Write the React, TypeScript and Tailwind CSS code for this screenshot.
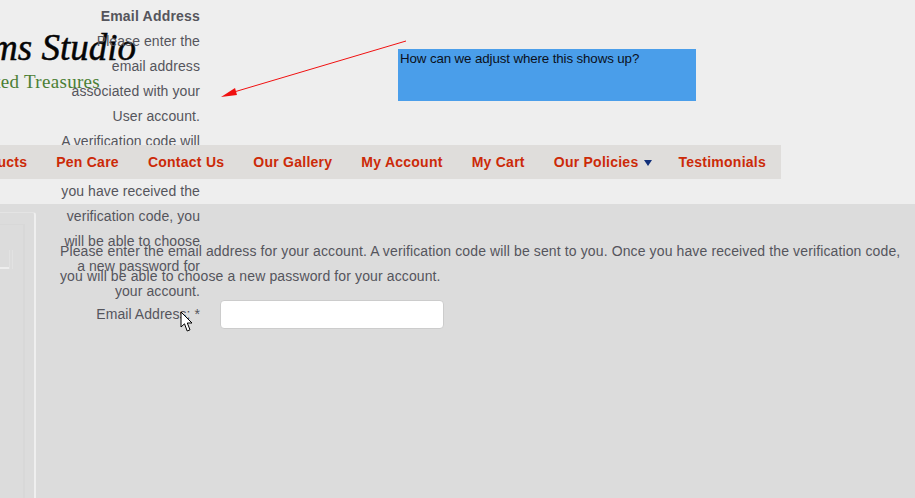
export default function App() {
  const nav = ["Products", "Pen Care", "Contact Us", "Our Gallery", "My Account", "My Cart", "Our Policies", "Testimonials"];
  const lines = ["Please enter the", "email address", "associated with your", "User account.", "A verification code will", "be sent to you. Once", "you have received the", "verification code, you", "will be able to choose", "a new password for", "your account."];
  return (
    <div className="relative flex flex-col w-[915px] h-[498px] overflow-hidden bg-[#dcdcdc] text-[14px] tracking-[0.12px] text-[#55555c] font-['Liberation_Sans',Arial,sans-serif]">
      {/* Header band */}
      <header className="flex flex-col h-[204px] shrink-0 bg-[#eeeeee]">
        <div className="flex items-start h-[145px]">
          {/* Logo */}
          <div className="flex flex-col items-end w-[136px] shrink-0 pt-[29px] whitespace-nowrap font-['Liberation_Serif',serif] tracking-normal">
            <div className="text-[37px] leading-[37px] italic text-[#050505] [-webkit-text-stroke:0.5px_#050505]">Willims Studio</div>
            <div className="text-[19px] leading-[24px] mt-[4px] mr-[36px] text-[#4b7f35] tracking-[0.3px]">Hand Crafted Treasures</div>
          </div>
          {/* Blue note */}
          <div className="ml-[262px] mt-[49px] w-[298px] h-[52px] bg-[#4a9eea] p-[2px] text-[13.33px] leading-[16px] text-[#0b1020] tracking-[-0.12px]">
            How can we adjust where this shows up?
          </div>
        </div>
        {/* Nav */}
        <nav className="relative z-10 w-[781px] h-[34px] shrink-0 bg-[#dfdddb] flex items-center justify-end gap-[29px] pr-[15px] whitespace-nowrap font-bold tracking-[0.25px] text-[#cc2a08]">
          {nav.map((n) => (
            <span key={n} className="flex items-center gap-[6px]">
              {n}
              {n === "Our Policies" && (
                <svg width="8" height="6" viewBox="0 0 8 6" className="mt-[2px] -mr-[3px]">
                  <polygon points="0,0 8,0 4,6" fill="#12307a" />
                </svg>
              )}
            </span>
          ))}
        </nav>
      </header>

      {/* Main */}
      <main className="flex flex-1">
        {/* Sidebar frame */}
        <aside className="w-[36px] shrink-0 mt-[8px] border-t border-r-2 border-t-[#e4e4e4] border-r-[#efefef] rounded-tr-[3px] pt-[11px] pr-[9px]">
          <div className="flex h-full border-t border-r-2 border-[#d8d8d8] pt-[15px]">
            <div className="w-[9px] h-[29px] border-b-2 border-b-[#eeeeee]" />
            <div className="w-[4px] h-[19px] mt-[10px] border-x border-[#e2e2e2]" />
          </div>
        </aside>
        <div className="flex flex-col flex-1 pt-[35px]">
          <p className="ml-[24px] w-[850px] leading-[25px]">
            Please enter the email address for your account. A verification code will be sent to you. Once you have received the verification code, you will be able to choose a new password for your account.
          </p>
          {/* Form row */}
          <div className="flex items-center h-[29px] mt-[11px]">
            <label className="w-[164px] text-right tracking-[0.06px]">Email Address: *</label>
            <input className="ml-[20px] w-[224px] h-[29px] bg-white border border-[#cccccc] rounded-[4px]" />
          </div>
        </div>
      </main>

      {/* Stacked description column, lying over the page */}
      <div className="absolute left-0 top-[4px] w-[200px] text-right leading-[25px] tracking-[0.08px]">
        <div className="font-bold tracking-[0.2px]">Email Address</div>
        {lines.map((l) => (
          <div key={l}>{l}</div>
        ))}
      </div>

      {/* Arrow */}
      <svg className="absolute left-[215px] top-[35px]" width="200" height="70" viewBox="215 35 200 70">
        <line x1="406" y1="41" x2="234" y2="92" stroke="#f01010" strokeWidth="1" />
        <polygon points="221,97 235,88 237,95" fill="#f01010" />
      </svg>

      {/* Cursor */}
      <svg className="absolute left-[180px] top-[311px]" width="14" height="22" viewBox="0 0 14 22">
        <path d="M1 1 L1 16 L4.5 12.8 L7.2 20 L10 18.8 L7.3 12 L12 12 Z" fill="#ffffff" stroke="#000000" strokeWidth="1" />
      </svg>
    </div>
  );
}
